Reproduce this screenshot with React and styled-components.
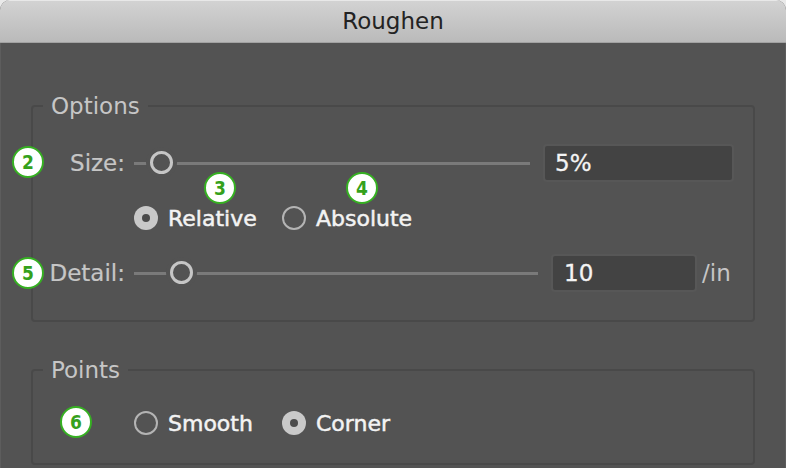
import React from 'react'
import styled, { createGlobalStyle } from 'styled-components'

const GlobalStyle = createGlobalStyle`
  html, body {
    margin: 0;
    padding: 0;
    background: #e9e9e9;
  }
`

const Window = styled.div`
  position: relative;
  width: 786px;
  height: 468px;
  background: #535353;
  border-radius: 10px 10px 0 0;
  overflow: hidden;
  font-family: "DejaVu Sans", "Liberation Sans", sans-serif;
`

const TitleBar = styled.div`
  height: 42px;
  display: flex;
  align-items: center;
  justify-content: center;
  background: linear-gradient(#d3d3d3, #bababa);
  border-bottom: 1px solid #a2a2a2;
  box-shadow: inset 0 1px 0 #e8e8e8;
  color: #232323;
  font-size: 23px;
`

const Body = styled.div`
  height: 425px;
  box-sizing: border-box;
  padding: 49px 30px 0;
  border-left: 1px solid #5d5d5d;
  border-right: 1px solid #5d5d5d;
`

const Group = styled.fieldset`
  margin: ${p => p.$top || 0}px 0 0;
  padding: ${p => p.$pad};
  min-inline-size: 0;
  border: 2px solid #494949;
  border-radius: 4px;
  display: flex;
  flex-direction: column;
  gap: 24px;
`

const Legend = styled.legend`
  margin-left: 10px;
  padding: 0 8px;
  font-size: 23px;
  line-height: 28px;
  color: #c6c6c6;
`

const Row = styled.div`
  display: flex;
  align-items: center;
  height: ${p => p.$h || 38}px;
`

const Label = styled.div`
  width: 92px;
  margin-right: 9px;
  flex: none;
  text-align: right;
  font-size: 23px;
  color: #c6c6c6;
  -webkit-text-stroke: 0.2px #c6c6c6;
`

const Slider = styled.div`
  position: relative;
  flex: 1;
  height: 26px;

  &::before {
    content: '';
    position: absolute;
    left: 0;
    right: 0;
    top: 12px;
    height: 3px;
    background: #7a7a7a;
  }
`

const Thumb = styled.div`
  position: absolute;
  top: 1px;
  left: ${p => p.$at - 12}px;
  width: 17px;
  height: 17px;
  border: 3.5px solid #c6c6c6;
  border-radius: 50%;
  background: #535353;
  box-shadow: 0 0 0 4px #535353;
`

const Field = styled.div`
  width: ${p => p.$w}px;
  height: 38px;
  box-sizing: border-box;
  margin-left: 13px;
  padding-left: ${p => p.$pl || 10}px;
  display: flex;
  align-items: center;
  background: #434343;
  border: 2px solid #575757;
  border-radius: 4px;
  color: #f4f4f4;
  font-size: 23px;
  -webkit-text-stroke: 0.3px #f4f4f4;
`

const Unit = styled.div`
  width: 32px;
  margin-left: 5px;
  font-size: 23px;
  color: #c6c6c6;
`

const Options = styled.div`
  display: grid;
  grid-template-columns: 148px auto;
  align-items: center;
`

const Option = styled.div`
  display: flex;
  align-items: center;
`

const Dot = styled.div`
  width: 24px;
  height: 24px;
  box-sizing: border-box;
  border-radius: 50%;
  display: flex;
  align-items: center;
  justify-content: center;
  background: ${p => (p.$on ? '#c9c9c9' : 'transparent')};
  border: ${p => (p.$on ? 'none' : '2px solid #b4b4b4')};

  &::after {
    content: '';
    display: ${p => (p.$on ? 'block' : 'none')};
    width: 8px;
    height: 8px;
    border-radius: 50%;
    background: #4b4b4b;
  }
`

const OptionText = styled.span`
  margin-left: 10px;
  font-size: 22px;
  color: #f3f3f3;
  -webkit-text-stroke: 0.5px #f3f3f3;
`

const Badge = styled.div`
  position: absolute;
  left: ${p => p.$x - 16}px;
  top: ${p => p.$y - 16}px;
  width: 32px;
  height: 32px;
  box-sizing: border-box;
  border: 2.5px solid #36b022;
  border-radius: 50%;
  background: #fff;
  display: flex;
  align-items: center;
  justify-content: center;
  color: #35a11c;
  font-family: "DejaVu Sans Condensed", "DejaVu Sans", sans-serif;
  font-weight: bold;
  font-size: 19px;
`

const Radio = ({ on, children }) => (
  <Option>
    <Dot $on={on} />
    <OptionText>{children}</OptionText>
  </Option>
)

export default function App() {
  return (
    <>
      <GlobalStyle />
      <Window>
        <TitleBar>Roughen</TitleBar>
        <Body>
          <Group $pad="24px 19px 28px 0">
            <Legend>Options</Legend>
            <Row>
              <Label>Size:</Label>
              <Slider>
                <Thumb $at={28} />
              </Slider>
              <Field $w={191}>5%</Field>
            </Row>
            <Row $h={24}>
              <Label />
              <Options>
                <Radio on>Relative</Radio>
                <Radio>Absolute</Radio>
              </Options>
            </Row>
            <Row>
              <Label>Detail:</Label>
              <Slider>
                <Thumb $at={48} />
              </Slider>
              <Field $w={146} $pl={11}>10</Field>
              <Unit>/in</Unit>
            </Row>
          </Group>
          <Group $top={34} $pad="27px 19px 28px 0">
            <Legend>Points</Legend>
            <Row $h={24}>
              <Label />
              <Options>
                <Radio>Smooth</Radio>
                <Radio on>Corner</Radio>
              </Options>
            </Row>
          </Group>
        </Body>
        <Badge $x={28} $y={162}>2</Badge>
        <Badge $x={220} $y={188}>3</Badge>
        <Badge $x={362} $y={188}>4</Badge>
        <Badge $x={28} $y={273}>5</Badge>
        <Badge $x={76} $y={422}>6</Badge>
      </Window>
    </>
  )
}
